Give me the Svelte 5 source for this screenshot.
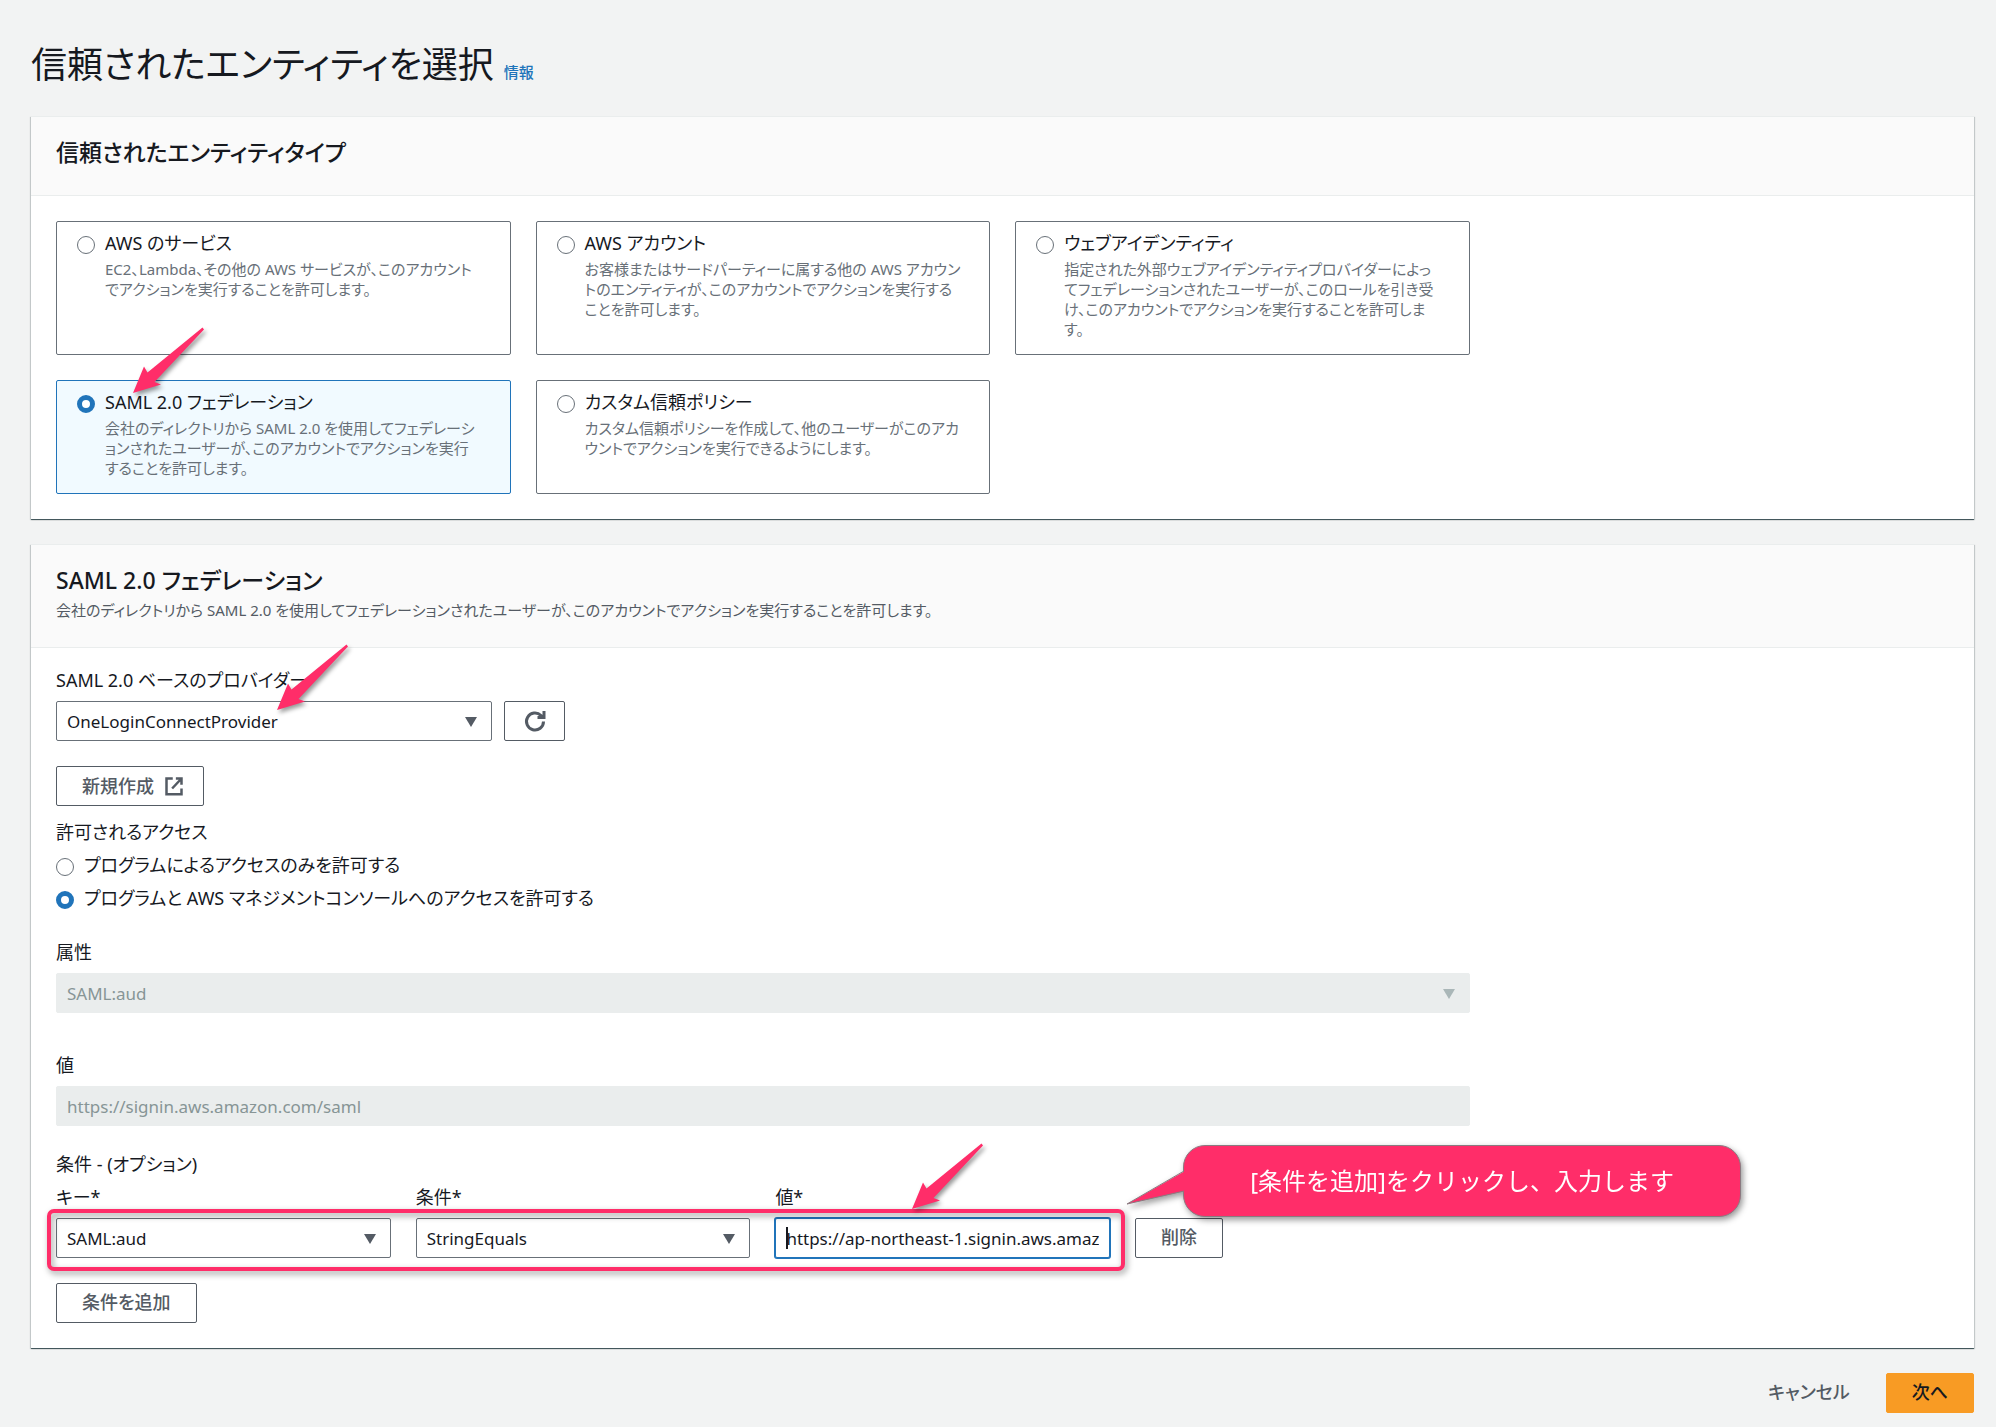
<script lang="ts">
	const types = [
		{
			id: 'service',
			title: 'AWS のサービス',
			text: 'EC2、Lambda、その他の AWS サービスが、このアカウントでアクションを実行することを許可します。',
		},
		{
			id: 'account',
			title: 'AWS アカウント',
			text: 'お客様またはサードパーティーに属する他の AWS アカウントのエンティティが、このアカウントでアクションを実行することを許可します。',
		},
		{
			id: 'web',
			title: 'ウェブアイデンティティ',
			text: '指定された外部ウェブアイデンティティプロバイダーによってフェデレーションされたユーザーが、このロールを引き受け、このアカウントでアクションを実行することを許可します。',
		},
		{
			id: 'saml',
			title: 'SAML 2.0 フェデレーション',
			text: '会社のディレクトリから SAML 2.0 を使用してフェデレーションされたユーザーが、このアカウントでアクションを実行することを許可します。',
		},
		{
			id: 'custom',
			title: 'カスタム信頼ポリシー',
			text: 'カスタム信頼ポリシーを作成して、他のユーザーがこのアカウントでアクションを実行できるようにします。',
		},
	]

	const accessOptions = [
		{ id: 'program', label: 'プログラムによるアクセスのみを許可する' },
		{ id: 'console', label: 'プログラムと AWS マネジメントコンソールへのアクセスを許可する' },
	]

	let entityType = $state('saml')
	let access = $state('console')
	let conditionValue = $state('https://ap-northeast-1.signin.aws.amazon.com/saml')
</script>

{#snippet arrow()}
	<svg class="arrow" viewBox="0 0 72 67" aria-hidden="true">
		<path d="M0 66 11 39.500 14.500 45.500 69.500 .5 71 2.500 21.500 55 28 57.500Z" />
	</svg>
{/snippet}

{#snippet caret()}
	<svg class="caret" viewBox="0 0 14 12" aria-hidden="true">
		<path d="M1 1h12L7 11Z" />
	</svg>
{/snippet}

<main>
	<header class="page-title">
		<h1>信頼されたエンティティを選択</h1>
		<a href="#info">情報</a>
	</header>

	<section class="panel">
		<header><h2>信頼されたエンティティタイプ</h2></header>
		<div class="body">
			<div class="tiles" role="radiogroup" aria-label="信頼されたエンティティタイプ">
				{#each types as { id, title, text }}
					<label class="tile" class:selected={entityType === id}>
						<input type="radio" name="type" value={id} bind:group={entityType} />
						<span>
							<span class="title">{title}</span>
							<span class="text">{text}</span>
						</span>
						{#if id === 'saml'}{@render arrow()}{/if}
					</label>
				{/each}
			</div>
		</div>
	</section>

	<section class="panel">
		<header>
			<h2>SAML 2.0 フェデレーション</h2>
			<p>
				会社のディレクトリから SAML 2.0 を使用してフェデレーションされたユーザーが、このアカウントでアクションを実行することを許可します。
			</p>
		</header>
		<div class="body fields">
			<div class="form">
				<div class="field">
					<label for="provider">SAML 2.0 ベースのプロバイダー</label>
					<div class="provider">
						<div class="select">
							<select id="provider"><option>OneLoginConnectProvider</option></select>
							{@render caret()}
							{@render arrow()}
						</div>
						<button class="icon" aria-label="更新">
							<svg viewBox="0 0 20 20" width="20" height="20" aria-hidden="true">
								<path d="M18.500 10.500A8.500 8.500 0 1 1 16 4.500L17.500 6M19 0v6.500H12.500" />
							</svg>
						</button>
					</div>
				</div>

				<button class="create">
					新規作成
					<svg viewBox="0 0 16 16" width="20" height="20" aria-hidden="true">
						<path d="M7 2H2v12.500h12V10M9.500 2H14v5M14 2 6.500 10" />
					</svg>
				</button>

				<fieldset>
					<legend>許可されるアクセス</legend>
					{#each accessOptions as { id, label }}
						<label>
							<input type="radio" name="access" value={id} bind:group={access} />
							{label}
						</label>
					{/each}
				</fieldset>

				<div class="field attribute">
					<label for="attribute">属性</label>
					<div class="select">
						<select id="attribute" disabled><option>SAML:aud</option></select>
						{@render caret()}
					</div>
				</div>

				<div class="field value">
					<label for="value">値</label>
					<input id="value" type="text" value="https://signin.aws.amazon.com/saml" disabled />
				</div>

				<h3>条件 - (オプション)</h3>
				<div class="condition">
					<div class="field">
						<label for="key">キー*</label>
						<div class="select">
							<select id="key"><option>SAML:aud</option></select>
							{@render caret()}
						</div>
					</div>
					<div class="field">
						<label for="operator">条件*</label>
						<div class="select">
							<select id="operator"><option>StringEquals</option></select>
							{@render caret()}
						</div>
					</div>
					<div class="field">
						<label for="condition-value">値*</label>
						<div class="active">
							<input id="condition-value" type="text" bind:value={conditionValue} />
							<span class="cursor"></span>
							{@render arrow()}
						</div>
					</div>
					<div class="remove">
						<button>削除</button>
						<div class="callout">
							<svg viewBox="0 0 60 36" aria-hidden="true">
								<path class="fill" d="M59 1 1 34 59 21Z" />
								<path class="edge" d="M58 1 1 34 58 21" />
							</svg>
							[条件を追加]をクリックし、入力します
						</div>
					</div>
					<div class="frame"></div>
				</div>
				<button>条件を追加</button>
			</div>
		</div>
	</section>

	<footer>
		<button class="link">キャンセル</button>
		<button class="primary">次へ</button>
	</footer>
</main>

<style>
	:global(body) {
		margin: 0;
		background: #f2f3f3;
	}

	main {
		padding: 40px 22px 16px 31px;
		color: #16191f;
		font: 18px/25px 'Noto Sans', 'Noto Sans CJK JP', sans-serif;
		font-feature-settings: 'palt';
	}

	h1,
	h2,
	h3,
	p,
	fieldset {
		margin: 0;
		padding: 0;
		border: 0;
	}

	.page-title {
		display: flex;
		align-items: baseline;
		gap: 10px;
		padding-bottom: 26px;

		& h1 {
			font-size: 36px;
			font-weight: 400;
			line-height: 50px;
		}

		& a {
			color: #2074ba;
			font-size: 15px;
			font-weight: 500;
			text-decoration: none;
		}
	}

	.panel {
		margin-bottom: 25px;
		background: #fff;
		border-top: 1px solid #eaeded;
		box-shadow:
			0 1px 1px #001c244d,
			1px 1px 1px #001c2426,
			-1px 1px 1px #001c2426,
			0 1px 0 #879596;

		& > header {
			padding: 19px 25px 27px;
			background: #fafafa;
			border-bottom: 1px solid #eaeded;
		}

		& h2 {
			font-size: 23px;
			font-weight: 500;
			line-height: 32px;
		}

		& p {
			margin-top: 4px;
			color: #545b64;
			font-size: 15px;
			line-height: 20px;
		}
	}

	.body {
		padding: 25px;
	}

	.fields {
		padding-top: 20px;
	}

	.tiles,
	.form {
		width: calc(75% - 6px);
	}

	.tiles {
		display: grid;
		grid-template-columns: repeat(3, 1fr);
		gap: 25px;
	}

	.tile {
		position: relative;
		display: flex;
		gap: 10px;
		padding: 9px 28px 12px 20px;
		border: 1px solid #687078;
		border-radius: 2px;

		& .title,
		& .text {
			display: block;
		}

		& .text {
			color: #687078;
			font-size: 15px;
			line-height: 20px;
			line-break: loose;
			padding-block: 3px;
		}

		& .arrow {
			left: 76px;
			top: -54px;
		}
	}

	.selected {
		background: #f1faff;
		border-color: #2074ba;
	}

	input[type='radio'] {
		appearance: none;
		flex: none;
		width: 18px;
		height: 18px;
		margin: 5px 0 0;
		background: #fff;
		border: 1px solid #687078;
		border-radius: 50%;

		&:checked {
			border: 5px solid #2074ba;
		}
	}

	.field > label {
		display: block;
		padding-bottom: 8px;
	}

	select,
	input[type='text'] {
		appearance: none;
		display: block;
		box-sizing: border-box;
		width: 100%;
		height: 40px;
		padding: 0 10px;
		color: #16191f;
		font: inherit;
		font-size: 17px;
		background: #fff;
		border: 1px solid #687078;
		border-radius: 2px;

		&:disabled {
			color: #879596;
			background: #eaeded;
			border-color: #eaeded;
			opacity: 1;
		}
	}

	.select,
	.active,
	.remove,
	.condition {
		position: relative;
	}

	.caret {
		position: absolute;
		right: 14px;
		top: 15px;
		width: 14px;
		fill: #545b64;
		pointer-events: none;
	}

	select:disabled + .caret {
		fill: #aab7b8;
	}

	button {
		box-sizing: border-box;
		height: 40px;
		padding: 0 25px 2px;
		color: #545b64;
		font: inherit;
		font-weight: 500;
		font-feature-settings: inherit;
		background: #fff;
		border: 1px solid #545b64;
		border-radius: 2px;

		& svg {
			fill: none;
			stroke: #545b64;
			stroke-width: 2;
		}
	}

	.provider {
		display: flex;
		gap: 12px;

		& .select {
			width: 436px;
		}

		& .arrow {
			left: 221px;
			top: -57px;
		}
	}

	.icon {
		display: grid;
		place-items: center;
		width: 61px;
		padding: 0;

		& svg {
			overflow: visible;
			stroke-width: 3;
		}
	}

	.create {
		display: flex;
		align-items: center;
		gap: 10px;
		margin: 25px 0 14px;
		padding: 0 19px 0 25px;
	}

	fieldset {
		display: grid;
		gap: 8px;

		& legend {
			padding: 0 0 8px;
		}

		& label {
			display: flex;
			gap: 10px;
		}
	}

	.attribute {
		padding: 29px 0 40px;
	}

	.value {
		padding-bottom: 26px;
	}

	h3 {
		font: inherit;
		padding-bottom: 8px;
	}

	.condition {
		display: grid;
		grid-template-columns: repeat(4, 1fr);
		gap: 25px;
		align-items: end;
		padding-bottom: 25px;
	}

	.active {
		& input {
			border-color: #2074ba;
			box-shadow: 0 0 0 1px #2074ba;
		}

		& .cursor {
			position: absolute;
			left: 11px;
			top: 9px;
			width: 2px;
			height: 22px;
			background: #16191f;
		}

		& .arrow {
			left: 137px;
			top: -75px;
		}
	}

	/* annotations drawn over the form */
	.arrow {
		position: absolute;
		z-index: 2;
		width: 72px;
		fill: #ff2d69;
		filter: drop-shadow(2px 3px 2px #0006);
		pointer-events: none;
	}

	.frame {
		position: absolute;
		left: -9px;
		right: 345px;
		bottom: 12px;
		height: 54px;
		border: 4px solid #ff2d69;
		border-radius: 7px;
		filter: drop-shadow(2px 3px 3px #0006);
		pointer-events: none;
	}

	.callout {
		position: absolute;
		left: 48px;
		bottom: 41px;
		box-sizing: border-box;
		width: 558px;
		padding: 20px 10px;
		color: #fff;
		font-size: 24px;
		font-weight: 400;
		font-feature-settings: normal;
		line-height: 30px;
		text-align: center;
		white-space: nowrap;
		background: #ff2d69;
		border: 1px solid #8a7a80;
		border-radius: 22px;
		filter: drop-shadow(2px 3px 3px #0006);

		& svg {
			position: absolute;
			left: -58px;
			top: 24px;
			width: 60px;
		}

		& .fill {
			fill: #ff2d69;
			stroke: none;
		}

		& .edge {
			fill: none;
			stroke: #8a7a80;
		}
	}

	footer {
		display: flex;
		justify-content: flex-end;
		gap: 10px;
	}

	.link {
		background: none;
		border-color: transparent;
	}

	.primary {
		color: #16191f;
		background: #f89b24;
		border-color: #f89b24;
	}
</style>
